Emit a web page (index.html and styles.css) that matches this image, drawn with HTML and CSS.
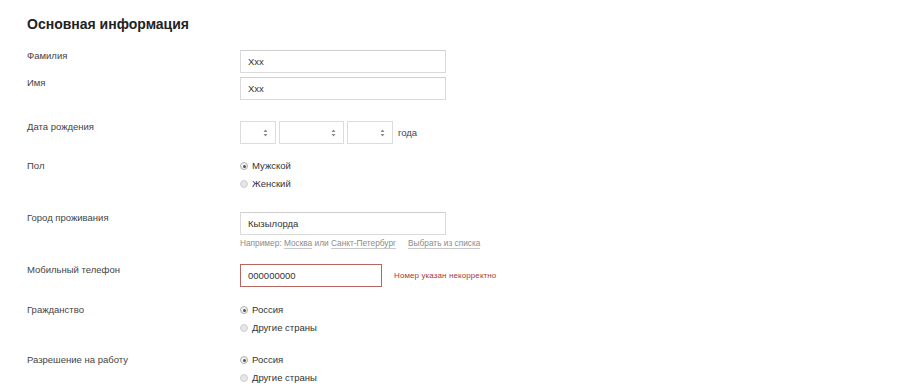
FILE: index.html
```
<!DOCTYPE html>
<html lang="ru">
<head>
<meta charset="utf-8">
<link rel="stylesheet" href="styles.css">
</head>
<body>
<div class="page">
  <h2 class="title">Основная информация</h2>

  <div class="row r-first">
    <div class="label">Фамилия</div>
    <div class="field"><div class="input">Xxx</div></div>
  </div>
  <div class="row r-tight">
    <div class="label">Имя</div>
    <div class="field"><div class="input">Xxx</div></div>
  </div>

  <div class="row r-date">
    <div class="label">Дата рождения</div>
    <div class="field date">
      <div class="select s-day"><svg class="arr" width="5" height="8" viewBox="0 0 5 8"><path d="M2.5 0.5 L4.5 3 L0.5 3 Z M0.5 5 L4.5 5 L2.5 7.5 Z" fill="#8a8a8a"/></svg></div>
      <div class="select s-month"><svg class="arr" width="5" height="8" viewBox="0 0 5 8"><path d="M2.5 0.5 L4.5 3 L0.5 3 Z M0.5 5 L4.5 5 L2.5 7.5 Z" fill="#8a8a8a"/></svg></div>
      <div class="select s-year"><svg class="arr" width="5" height="8" viewBox="0 0 5 8"><path d="M2.5 0.5 L4.5 3 L0.5 3 Z M0.5 5 L4.5 5 L2.5 7.5 Z" fill="#8a8a8a"/></svg></div>
      <span class="suffix">года</span>
    </div>
  </div>

  <div class="row r-sex">
    <div class="label">Пол</div>
    <div class="field radios">
      <div class="radio"><span class="dot on"></span>Мужской</div>
      <div class="radio"><span class="dot"></span>Женский</div>
    </div>
  </div>

  <div class="row r-city">
    <div class="label">Город проживания</div>
    <div class="field">
      <div class="input">Кызылорда</div>
      <div class="hint">Например: <span class="link">Москва</span> или <span class="link">Санкт-Петербург</span><span class="link pick">Выбрать из списка</span></div>
    </div>
  </div>

  <div class="row r-phone">
    <div class="label">Мобильный телефон</div>
    <div class="field phone">
      <div class="input error">000000000</div>
      <span class="err-text">Номер указан некорректно</span>
    </div>
  </div>

  <div class="row r-cit">
    <div class="label">Гражданство</div>
    <div class="field radios">
      <div class="radio"><span class="dot on"></span>Россия</div>
      <div class="radio"><span class="dot"></span>Другие страны</div>
    </div>
  </div>

  <div class="row r-work">
    <div class="label">Разрешение на работу</div>
    <div class="field radios">
      <div class="radio"><span class="dot on"></span>Россия</div>
      <div class="radio"><span class="dot"></span>Другие страны</div>
    </div>
  </div>
</div>
</body>
</html>
```

FILE: styles.css
```
html, body {
  margin: 0;
  padding: 0;
  background: #ffffff;
}
body {
  font-family: "Liberation Sans", Arial, sans-serif;
  color: #444;
}
.page {
  padding: 15px 0 0 27px;
}
.title {
  margin: 0;
  font-size: 14px;
  line-height: 18px;
  font-weight: bold;
  color: #222;
}
.row {
  display: grid;
  grid-template-columns: 213px 1fr;
  align-items: start;
}
.r-first { margin-top: 17px; }
.r-tight { margin-top: 4px; }
.r-date { margin-top: 21px; }
.r-sex { margin-top: 16px; }
.r-city { margin-top: 22px; }
.r-phone { margin-top: 15px; }
.r-cit { margin-top: 17px; }
.r-work { margin-top: 20px; }

.label {
  font-size: 9.5px;
  line-height: 12px;
  color: #444;
}
.input {
  box-sizing: border-box;
  width: 206px;
  height: 23px;
  border: 1px solid #dadada;
  border-top-color: #cfcfcf;
  padding-left: 7px;
  font-size: 9.5px;
  line-height: 21px;
  color: #333;
}
.phone {
  display: flex;
  align-items: center;
  gap: 12px;
}
.input.error {
  width: 142px;
  border-color: #b5675f;
}
.err-text {
  font-size: 8px;
  color: #a83a32;
  letter-spacing: 0.1px;
}
.hint {
  margin-top: 3px;
  font-size: 8.3px;
  line-height: 11px;
  color: #8c8c8c;
}
.link {
  border-bottom: 1px solid #c9c9c9;
}
.link.pick {
  margin-left: 12px;
}
.date {
  display: flex;
  align-items: center;
  gap: 3px;
}
.select {
  box-sizing: border-box;
  height: 23px;
  border: 1px solid #dcdcdc;
  display: flex;
  align-items: center;
  justify-content: flex-end;
  padding-right: 7px;
}
.s-day { width: 36px; }
.s-month { width: 65px; }
.s-year { width: 46px; }
.suffix {
  margin-left: 2px;
  font-size: 9.5px;
  color: #444;
}
.radios {
  display: flex;
  flex-direction: column;
  gap: 6px;
}
.radio {
  display: flex;
  align-items: center;
  font-size: 9.5px;
  line-height: 12px;
  color: #333;
}
.dot {
  box-sizing: border-box;
  width: 8px;
  height: 8px;
  border-radius: 50%;
  border: 1px solid #cfcfcf;
  background: #e6e6e6;
  margin: 0 4px 0 0;
  position: relative;
}
.dot.on {
  border-color: #b0b0b0;
  background: #f2f2f2;
}
.dot.on::after {
  content: "";
  position: absolute;
  left: 1.5px;
  top: 1.5px;
  width: 3px;
  height: 3px;
  border-radius: 50%;
  background: #555;
}
```
